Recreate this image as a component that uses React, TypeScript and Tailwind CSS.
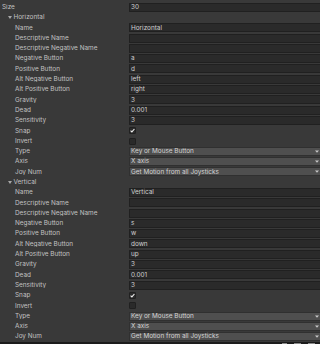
type Field =
  | { kind: "text"; label: string; value: string }
  | { kind: "check"; label: string; checked: boolean }
  | { kind: "popup"; label: string; value: string };

const axisFields = (name: string, neg: string, pos: string, altNeg: string, altPos: string): Field[] => [
  { kind: "text", label: "Name", value: name },
  { kind: "text", label: "Descriptive Name", value: "" },
  { kind: "text", label: "Descriptive Negative Name", value: "" },
  { kind: "text", label: "Negative Button", value: neg },
  { kind: "text", label: "Positive Button", value: pos },
  { kind: "text", label: "Alt Negative Button", value: altNeg },
  { kind: "text", label: "Alt Positive Button", value: altPos },
  { kind: "text", label: "Gravity", value: "3" },
  { kind: "text", label: "Dead", value: "0.001" },
  { kind: "text", label: "Sensitivity", value: "3" },
  { kind: "check", label: "Snap", checked: true },
  { kind: "check", label: "Invert", checked: false },
  { kind: "popup", label: "Type", value: "Key or Mouse Button" },
  { kind: "popup", label: "Axis", value: "X axis" },
  { kind: "popup", label: "Joy Num", value: "Get Motion from all Joysticks" },
];

const axes = [
  { title: "Horizontal", fields: axisFields("Horizontal", "a", "d", "left", "right") },
  { title: "Vertical", fields: axisFields("Vertical", "s", "w", "down", "up") },
];

const Row = ({ label, indent, children }: { label: React.ReactNode; indent: string; children?: React.ReactNode }) => (
  <div className="flex h-[10.3px] items-center">
    <div className={`w-[129px] shrink-0 truncate text-[#c2c2c2] ${indent}`}>{label}</div>
    <div className="flex h-full flex-1 items-center">{children}</div>
  </div>
);

const TextField = ({ value }: { value: string }) => (
  <div className="flex h-[9px] flex-1 items-center rounded-l-[1px] border border-r-0 border-[#202020] bg-[#2a2a2a] pl-[1px] text-[#d0d0d0]">
    {value}
  </div>
);

const Popup = ({ value }: { value: string }) => (
  <div className="flex h-[9px] flex-1 items-center justify-between rounded-l-[1px] border border-r-0 border-[#303030] bg-[#4f4f4f] pl-[1px] pr-[1px] text-[#d4d4d4]">
    <span>{value}</span>
    <svg width="4" height="3" viewBox="0 0 4 3">
      <path d="M0 0.5 H4 L2 2.8 Z" fill="#c8c8c8" />
    </svg>
  </div>
);

const Check = ({ checked }: { checked: boolean }) => (
  <div className="flex h-[7px] w-[7px] items-center justify-center rounded-[1px] border border-[#202020] bg-[#2a2a2a]">
    {checked && (
      <svg width="5" height="5" viewBox="0 0 5 5">
        <path d="M0.6 2.6 L1.9 3.9 L4.4 1" stroke="#f0f0f0" strokeWidth="1.1" fill="none" />
      </svg>
    )}
  </div>
);

export default function App() {
  return (
    <div
      className="h-[344px] w-[320px] overflow-hidden bg-[#393939] text-[6.4px] leading-none"
      style={{ fontFamily: "Inter, 'Liberation Sans', sans-serif" }}
    >
      <div className="h-[2px]" />
      <Row label="Size" indent="pl-[2px]">
        <TextField value="30" />
      </Row>
      {axes.map((axis) => (
        <div key={axis.title}>
          <Row
            indent="pl-[8px]"
            label={
              <span className="flex items-center gap-[1.5px]">
                <svg width="4" height="3" viewBox="0 0 4 3">
                  <path d="M0 0 H4 L2 3 Z" fill="#a8a8a8" />
                </svg>
                {axis.title}
              </span>
            }
          />
          {axis.fields.map((f) => (
            <Row key={f.label} label={f.label} indent="pl-[15px]">
              {f.kind === "text" && <TextField value={f.value} />}
              {f.kind === "popup" && <Popup value={f.value} />}
              {f.kind === "check" && <Check checked={f.checked} />}
            </Row>
          ))}
        </div>
      ))}
      <div className="flex h-[3px] items-start justify-end gap-[7px] bg-[#1c1c1c] pr-[5px] pt-[1px]">
        <div className="h-[2px] w-[5px] bg-[#8a8a8a]" />
        <div className="h-[2px] w-[7px] bg-[#8a8a8a]" />
        <div className="h-[2px] w-[7px] bg-[#8a8a8a]" />
      </div>
    </div>
  );
}
